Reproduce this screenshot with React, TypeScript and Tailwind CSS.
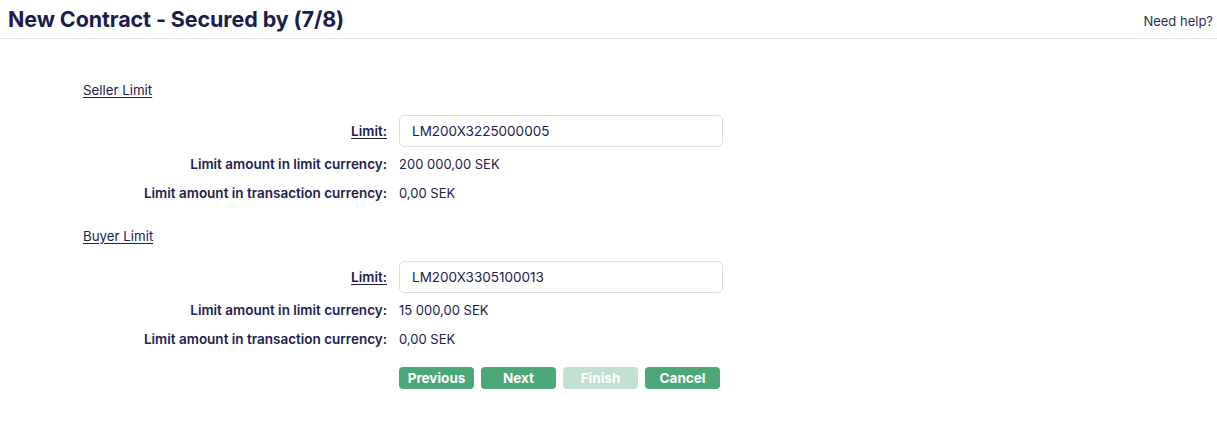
import React from "react";

// ============================================================================
// Limit section
// ============================================================================
interface LimitSectionProps {
  title: string;
  limitId: string;
  limitAmount: string;
  transactionAmount: string;
}

function LimitSection({ title, limitId, limitAmount, transactionAmount }: LimitSectionProps) {
  return (
    <div>
      <div className="h-[20px] flex items-center">
        <a className="text-[13.3px] text-[#1c2150] underline underline-offset-2">{title}</a>
      </div>
      <div className="mt-[14px] grid grid-cols-[304px_324px] gap-x-[12px] items-center">
        <span className="text-right text-[13.5px] font-semibold underline underline-offset-2">Limit:</span>
        <input
          readOnly
          value={limitId}
          className="h-[32px] rounded-[5px] border border-[#dcdde3] px-[12px] text-[13.5px] text-[#1c2150] outline-none"
        />
        <span className="mt-[6px] h-[23px] leading-[23px] text-right text-[13.5px] font-semibold">
          Limit amount in limit currency:
        </span>
        <span className="mt-[6px] h-[23px] leading-[23px] text-[13px]">{limitAmount}</span>
        <span className="mt-[6px] h-[23px] leading-[23px] text-right text-[13.5px] font-semibold">
          Limit amount in transaction currency:
        </span>
        <span className="mt-[6px] h-[23px] leading-[23px] text-[13px]">{transactionAmount}</span>
      </div>
    </div>
  );
}

// ============================================================================
// Wizard button
// ============================================================================
function WizardButton({ label, disabled }: { label: string; disabled?: boolean }) {
  return (
    <button
      disabled={disabled}
      className={`w-[75px] h-[22px] rounded-[4px] text-[13.5px] font-bold text-white ${
        disabled ? "bg-[#c2e0d1]" : "bg-[#4ca879]"
      }`}
    >
      {label}
    </button>
  );
}

// ============================================================================
// App
// ============================================================================
export default function App() {
  return (
    <div className="w-[1217px] h-[423px] bg-white text-[#1c2150] font-['Inter','Noto_Sans',sans-serif]">
      {/* Header */}
      <div className="h-[39px] border-b border-[#e1e2e6] flex items-center justify-between pl-[8px] pr-[4px]">
        <h1 className="text-[21.5px] font-bold tracking-[-0.1px] text-[#1a1e4d]">New Contract - Secured by (7/8)</h1>
        <span className="text-[13px] text-[#2a2f55] mt-[6px]">Need help?</span>
      </div>

      {/* Form */}
      <div className="pl-[83px] pt-[42px]">
        <LimitSection
          title="Seller Limit"
          limitId="LM200X3225000005"
          limitAmount="200 000,00 SEK"
          transactionAmount="0,00 SEK"
        />
        <div className="mt-[22px]">
          <LimitSection
            title="Buyer Limit"
            limitId="LM200X3305100013"
            limitAmount="15 000,00 SEK"
            transactionAmount="0,00 SEK"
          />
        </div>
        <div className="mt-[16px] ml-[316px] flex gap-[7px]">
          <WizardButton label="Previous" />
          <WizardButton label="Next" />
          <WizardButton label="Finish" disabled />
          <WizardButton label="Cancel" />
        </div>
      </div>
    </div>
  );
}
